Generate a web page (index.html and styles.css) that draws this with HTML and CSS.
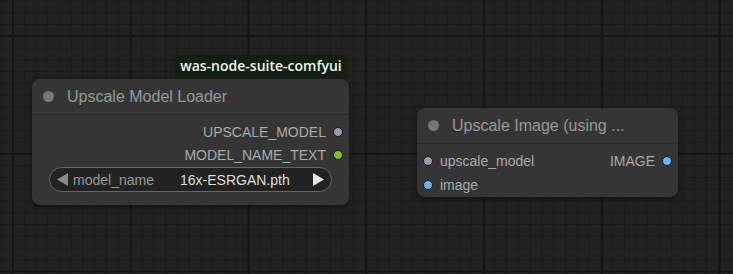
FILE: index.html
```html
<!DOCTYPE html>
<html lang="en">
<head>
    <meta charset="UTF-8">
    <meta name="viewport" content="width=device-width, initial-scale=1.0">
    <title>Graph Canvas</title>
    <link rel="stylesheet" href="styles.css">
</head>
<body>
    <div class="canvas">
        <div class="tag">was-node-suite-comfyui</div>

        <div class="node loader">
            <div class="node-title">
                <span class="title-dot"></span>
                <span class="title-text">Upscale Model Loader</span>
            </div>
            <div class="node-body">
                <div class="slot out">
                    <span class="slot-label">UPSCALE_MODEL</span>
                    <span class="dot model"></span>
                </div>
                <div class="slot out">
                    <span class="slot-label">MODEL_NAME_TEXT</span>
                    <span class="dot text"></span>
                </div>
                <div class="combo">
                    <svg class="arrow" width="11" height="13" viewBox="0 0 11 13"><polygon points="11,0 11,13 0,6.5" fill="#8a8a8a"/></svg>
                    <span class="combo-name">model_name</span>
                    <span class="combo-value">16x-ESRGAN.pth</span>
                    <svg class="arrow" width="11" height="13" viewBox="0 0 11 13"><polygon points="0,0 0,13 11,6.5" fill="#e6e6e6"/></svg>
                </div>
            </div>
        </div>

        <div class="node upscaler">
            <div class="node-title">
                <span class="title-dot"></span>
                <span class="title-text">Upscale Image (using ...</span>
            </div>
            <div class="node-body">
                <div class="slot split">
                    <span class="slot-in"><span class="dot model"></span><span class="slot-label">upscale_model</span></span>
                    <span class="slot-out"><span class="slot-label">IMAGE</span><span class="dot image"></span></span>
                </div>
                <div class="slot split">
                    <span class="slot-in"><span class="dot image"></span><span class="slot-label">image</span></span>
                </div>
            </div>
        </div>
    </div>
</body>
</html>
```

FILE: styles.css
```css
:root {
    --bg: #222222;
    --node: #353535;
    --title: #999999;
    --label: #aaaaaa;
}
body {
    margin: 0;
    background: var(--bg);
    font-family: "Liberation Sans", Arial, sans-serif;
    overflow: hidden;
}
.canvas {
    position: relative;
    width: 733px;
    height: 274px;
    background-color: var(--bg);
    background-image:
        linear-gradient(to right, #151515 2px, transparent 2px),
        linear-gradient(to bottom, #151515 2px, transparent 2px),
        linear-gradient(to right, #1b1b1b 1px, transparent 1px),
        linear-gradient(to bottom, #1b1b1b 1px, transparent 1px);
    background-size: 117.8px 117.8px, 117.8px 117.8px, 11.78px 11.78px, 11.78px 11.78px;
    background-position: 12px 35px, 12px 35px, 12px 0, 0 0.5px;
}
.tag {
    position: absolute;
    left: 175px;
    top: 55px;
    width: 172px;
    height: 23px;
    background: #112011;
    border-radius: 6px 6px 0 0;
    color: #f2f2f2;
    font-family: "Open Sans", "Noto Sans", sans-serif;
    font-size: 14px;
    font-weight: 600;
    line-height: 22px;
    text-align: center;
}
.node {
    position: absolute;
    background: var(--node);
    border-radius: 8px;
    box-shadow: 0 2px 6px rgba(0, 0, 0, 0.5);
}
.loader {
    left: 32px;
    top: 79px;
    width: 317px;
    height: 126px;
}
.upscaler {
    left: 417px;
    top: 108px;
    width: 261px;
    height: 89px;
}
.node-title {
    display: flex;
    align-items: center;
    height: 35px;
    border-bottom: 1px solid #2b2b2b;
    padding-left: 11px;
}
.title-dot {
    width: 11px;
    height: 11px;
    border-radius: 50%;
    background: #777777;
    margin-right: 13px;
}
.title-text {
    color: var(--title);
    font-size: 16px;
}
.node-body {
    padding-top: 5px;
}
.slot {
    display: flex;
    align-items: center;
    height: 23px;
    font-size: 14px;
    color: var(--label);
}
.slot.out {
    justify-content: flex-end;
    padding-right: 6px;
}
.slot.out .dot {
    margin-left: 7px;
}
.dot {
    width: 8px;
    height: 8px;
    border-radius: 50%;
    border: 1px solid #1a1a1a;
}
.dot.model { background: #9a9ab0; }
.dot.text { background: #7ec01c; }
.dot.image { background: #64b5f6; }
.upscaler .slot {
    height: 24px;
    justify-content: space-between;
    padding: 0 6px;
}
.slot-in, .slot-out {
    display: flex;
    align-items: center;
}
.slot-in .dot {
    margin-right: 7px;
}
.slot-out .dot {
    margin-left: 7px;
}
.combo {
    display: flex;
    align-items: center;
    box-sizing: border-box;
    margin: 1px 17px 0 17px;
    height: 25px;
    border: 1px solid #666666;
    border-radius: 13px;
    background: #222222;
    font-size: 14px;
    padding: 0 7px 0 7px;
}
.arrow {
    flex: none;
}
.combo-name {
    color: #999999;
    margin-left: 5px;
    width: 107px;
}
.combo-value {
    color: #dddddd;
    flex: 1;
}
```
